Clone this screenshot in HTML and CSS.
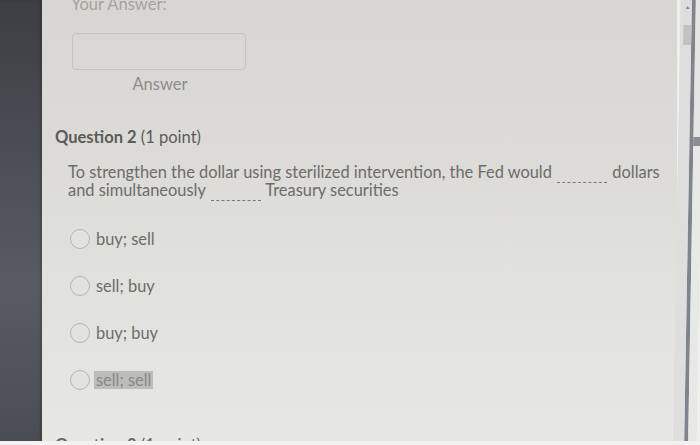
FILE: index.html
```html
<!DOCTYPE html>
<html>
<head>
<meta charset="utf-8">
<link rel="stylesheet" href="styles.css">
</head>
<body>
<div class="screen">
  <div class="side"></div>
  <main class="content">
    <div class="prev">
      <div class="your">Your Answer:</div>
      <div class="inputbox"></div>
      <div class="answer">Answer</div>
    </div>
    <section class="question">
      <h2 class="qtitle"><b>Question 2</b> (1 point)</h2>
      <p class="qtext">To strengthen the dollar using sterilized intervention, the Fed would <span class="blank"></span> dollars and simultaneously <span class="blank"></span> Treasury securities</p>
      <ul class="options">
        <li class="opt"><span class="radio"></span><span class="label">buy; sell</span></li>
        <li class="opt"><span class="radio"></span><span class="label">sell; buy</span></li>
        <li class="opt"><span class="radio"></span><span class="label">buy; buy</span></li>
        <li class="opt"><span class="radio"></span><span class="label sel">sell; sell</span></li>
      </ul>
    </section>
    <h2 class="qtitle next"><b>Question 3</b> (1 point)</h2>
  </main>
  <div class="scroll">
    <div class="track">
      <span class="arrow"></span>
      <span class="thumb"></span>
    </div>
    <div class="rail"></div>
    <div class="edge"></div>
  </div>
</div>
</body>
</html>
```
FILE: styles.css
```css
html, body {
  margin: 0;
  padding: 0;
  width: 700px;
  height: 445px;
  overflow: hidden;
}
body {
  font-family: Lato, "Open Sans", sans-serif;
  background: #efefec;
}
.screen {
  display: flex;
  width: 700px;
  height: 441px;
  overflow: hidden;
  border-bottom: 4px solid #f2f2f0;
}
.side {
  width: 42px;
  flex: none;
  background: linear-gradient(180deg, #3c3e43 0%, #4b4e54 35%, #585b61 65%, #4a4d53 100%);
  box-shadow: inset -2px 0 2px rgba(0,0,0,0.15);
}
.content {
  flex: 1;
  padding: 0 0 0 13px;
  background: linear-gradient(180deg, #d7d6d2 0%, #dcdbd7 35%, #e2e2de 70%, #e7e7e3 100%);
  overflow: hidden;
}
.prev {
  width: 176px;
  margin-left: 16px;
  display: flex;
  flex-direction: column;
  align-items: center;
}
.your {
  align-self: flex-start;
  font-size: 16.5px;
  color: #a3a3a0;
  line-height: 16px;
  margin-top: -4px;
}
.inputbox {
  width: 172px;
  height: 35px;
  margin-top: 21px;
  border: 1px solid #c4c4c0;
  border-radius: 4px;
}
.answer {
  font-size: 16.5px;
  color: #8d8d8b;
  margin-top: 5px;
  line-height: 18px;
  margin-left: 2px;
}
.question {
  margin-top: 35px;
}
.qtitle {
  font-size: 16.5px;
  font-weight: normal;
  color: #5b5b5a;
  margin: 0;
  line-height: 18px;
}
.qtitle b {
  font-weight: 700;
}
.qtext {
  margin: 17px 0 0 13px;
  width: 600px;
  font-size: 16.4px;
  line-height: 18px;
  color: #6c6c6b;
}
.blank {
  display: inline-block;
  width: 50px;
  height: 5px;
  border-bottom: 1px dashed #7a7a78;
  margin: 0 1px;
  vertical-align: baseline;
  position: relative;
  top: 5px;
}
.options {
  list-style: none;
  margin: 25px 0 0 15px;
  padding: 0;
}
.opt {
  display: flex;
  align-items: center;
  height: 29px;
  margin-bottom: 18px;
}
.radio {
  width: 18px;
  height: 18px;
  border: 1px solid #b5b5b3;
  border-radius: 50%;
  background: #e2e2de;
  flex: none;
}
.label {
  margin-left: 6px;
  font-size: 16.4px;
  color: #6c6c6b;
  line-height: 18px;
}
.label.sel {
  margin-left: 4px;
  padding: 0 2px;
  background: #bdbdbb;
  color: #8a8a88;
}
.next {
  margin-top: 42px;
  margin-left: 0;
  color: #6a6a68;
}
.scroll {
  width: 23px;
  flex: none;
  display: flex;
  background: #dcdcd9;
  transform: skewX(-1deg);
}
.track {
  width: 11px;
  position: relative;
  background: #dedede;
}
.arrow {
  position: absolute;
  left: 5px;
  top: 6px;
  width: 0;
  height: 0;
  border-left: 2px solid transparent;
  border-right: 2px solid transparent;
  border-bottom: 3px solid #8a8a8a;
}
.thumb {
  position: absolute;
  left: 3px;
  top: 25px;
  width: 8px;
  height: 20px;
  background: #c2c2c1;
}
.rail {
  width: 4px;
  background: #80848c;
}
.edge {
  flex: 1;
  background: linear-gradient(180deg, #e4e4e2 0%, #e4e4e2 31%, #8b8d92 31%, #8b8d92 33%, #e8e8e6 33%);
}
```
